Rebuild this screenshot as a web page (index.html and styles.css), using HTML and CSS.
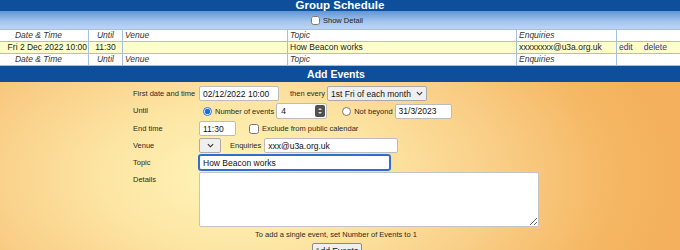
FILE: index.html
```html
<!DOCTYPE html>
<html lang="en">

<head>
  <meta charset="UTF-8">
  <meta name="viewport" content="width=device-width, initial-scale=1.0">
  <title>Group Schedule</title>
  <link rel="stylesheet" href="styles.css">
</head>

<body>
  <div class="bar-title top">Group Schedule</div>
  <div class="bar-light">
    <label><input type="checkbox"> Show Detail</label>
  </div>

  <table class="events">
    <colgroup>
      <col style="width:100px">
      <col style="width:34px">
      <col style="width:165px">
      <col style="width:229px">
      <col style="width:100px">
      <col style="width:64px">
    </colgroup>
    <tr class="head">
      <td class="c-date">Date &amp; Time</td>
      <td class="c-until">Until</td>
      <td>Venue</td>
      <td>Topic</td>
      <td>Enquiries</td>
      <td></td>
    </tr>
    <tr class="row">
      <td class="c-date">Fri 2 Dec 2022 10:00</td>
      <td class="c-until">11:30</td>
      <td></td>
      <td>How Beacon works</td>
      <td>xxxxxxxx@u3a.org.uk</td>
      <td class="actions"><a href="#">edit</a><a href="#">delete</a></td>
    </tr>
    <tr class="head">
      <td class="c-date">Date &amp; Time</td>
      <td class="c-until">Until</td>
      <td>Venue</td>
      <td>Topic</td>
      <td>Enquiries</td>
      <td></td>
    </tr>
  </table>

  <div class="bar-title add">Add Events</div>

  <form class="add-form">
    <div class="fields">
      <label class="lbl">First date and time</label>
      <div class="line">
        <input class="in w-date" type="text" value="02/12/2022 10:00">
        <span class="then">then every</span>
        <span class="sel w-every">
          <select><option>1st Fri of each month</option></select>
          <svg class="chev" viewBox="0 0 8 5"><polyline points="1,1 4,4 7,1"/></svg>
        </span>
      </div>

      <label class="lbl">Until</label>
      <div class="line tall">
        <input class="radio" type="radio" name="until" checked>
        <span class="opt">Number of events</span>
        <span class="num">
          <input type="text" value="4">
          <span class="spin"><i class="up"></i><i class="down"></i></span>
        </span>
        <input class="radio second" type="radio" name="until">
        <span class="opt">Not beyond</span>
        <input class="in w-beyond" type="text" value="31/3/2023">
      </div>

      <label class="lbl">End time</label>
      <div class="line">
        <input class="in w-end" type="text" value="11:30">
        <input class="check" type="checkbox">
        <span class="opt">Exclude from public calendar</span>
      </div>

      <label class="lbl">Venue</label>
      <div class="line">
        <span class="sel w-venue">
          <select><option></option></select>
          <svg class="chev" viewBox="0 0 8 5"><polyline points="1,1 4,4 7,1"/></svg>
        </span>
        <span class="enq">Enquiries</span>
        <input class="in w-enq" type="text" value="xxx@u3a.org.uk">
      </div>

      <label class="lbl">Topic</label>
      <div class="line">
        <input class="in w-topic focused" type="text" value="How Beacon works">
      </div>

      <label class="lbl">Details</label>
      <div>
        <textarea class="details"></textarea>
      </div>
    </div>

    <p class="note">To add a single event, set Number of Events to 1</p>
    <div class="submit">
      <button type="button">Add Events</button>
    </div>
  </form>
</body>

</html>
```

FILE: styles.css
```css
* {
  box-sizing: border-box;
}

body {
  margin: 0;
  font-family: "Liberation Sans", Arial, sans-serif;
  color: #222;
  background: #f5b764;
  overflow: hidden;
}

.bar-title {
  background: #0d4f9b;
  color: white;
  font-weight: bold;
  text-align: center;
}

.bar-title.top {
  height: 11px;
  line-height: 11px;
  font-size: 11.5px;
}

.bar-title.add {
  height: 16px;
  line-height: 16px;
  font-size: 10.5px;
  padding-right: 8px;
}

.bar-light {
  height: 18px;
  display: flex;
  justify-content: center;
  align-items: center;
  background: linear-gradient(#5f95d7, #a7c6ec 60%, #bcd5f2);
  font-size: 7.5px;
  padding-right: 6px;
}

.bar-light label {
  display: flex;
  align-items: center;
  gap: 3px;
}

.bar-light input {
  width: 9px;
  height: 9px;
  margin: 0;
}

/* schedule table */
.events {
  border-collapse: collapse;
  table-layout: fixed;
  width: 692px;
  margin-left: -12px;
  background: white;
  font-size: 8.5px;
}

.events td {
  border: 1px solid #a3c0e0;
  height: 11px;
  line-height: 11px;
  padding: 0 2px;
  white-space: nowrap;
  overflow: hidden;
}

.events tr.head td {
  font-style: italic;
  color: #333;
}

.events tr.row td {
  background: #ffffcc;
}

.events .c-date,
.events .c-until {
  text-align: center;
}

.events tr.row .c-date {
  text-align: right;
  padding-right: 1px;
}

.events .actions a {
  color: #2b2bb8;
  text-decoration: none;
  margin-right: 11px;
}

/* add events form */
.add-form {
  margin: 0;
  padding: 4px 0 12px;
  font-size: 7.5px;
  color: #2a2a2a;
  background: radial-gradient(ellipse 440px 240px at 240px 95px, #fff5bb 0%, #fde6a4 30%, #f9cd85 60%, #f5b763 85%, #f4b05c 100%);
}

.fields {
  display: grid;
  grid-template-columns: 66px 1fr;
  row-gap: 2px;
  margin-left: 133px;
}

.lbl {
  line-height: 15px;
}

.line {
  display: flex;
  align-items: center;
  height: 15px;
}

.line.tall {
  height: 16px;
}

.in {
  height: 15px;
  border: 1px solid #bcbcbc;
  border-radius: 2px;
  background: white;
  font: 8.5px "Liberation Sans", Arial, sans-serif;
  color: #111;
  padding: 0 3px;
  outline: none;
}

.w-date { width: 80px; }
.w-beyond { width: 57px; margin-left: 2px; }
.w-end { width: 37px; }
.w-enq { width: 134px; margin-left: 3px; }
.w-topic { width: 191px; }

.in.focused {
  border-color: #2f6dcf;
  box-shadow: 0 0 0 1px #2f6dcf;
}

.then {
  margin-left: 11px;
}

.sel {
  position: relative;
  display: inline-block;
  height: 15px;
  margin-left: 2px;
}

.sel select {
  appearance: none;
  width: 100%;
  height: 15px;
  border: 1px solid #a9a9a9;
  border-radius: 2px;
  background: #efefef;
  font: 8.5px "Liberation Sans", Arial, sans-serif;
  color: #111;
  padding: 0 0 0 3px;
  outline: none;
}

.chev {
  position: absolute;
  right: 4px;
  top: 5px;
  width: 7px;
  height: 5px;
  fill: none;
  stroke: #333;
  stroke-width: 1.3;
}

.w-every { width: 100px; }

.w-venue {
  width: 22px;
  margin-left: 0;
}

.w-venue .chev {
  right: 7px;
}

.enq {
  margin-left: 9px;
}

.radio {
  width: 9px;
  height: 9px;
  margin: 0 0 0 4px;
  accent-color: #1f6fd8;
}

.radio.second {
  margin-left: 15px;
}

.opt {
  margin-left: 3px;
}

.check {
  width: 10px;
  height: 10px;
  margin: 0 0 0 13px;
}

.num {
  display: flex;
  width: 51px;
  height: 16px;
  margin-left: 2px;
  border: 1px solid #bcbcbc;
  border-radius: 2px;
  background: white;
}

.num input {
  flex: 1;
  width: 0;
  border: none;
  outline: none;
  padding: 0 4px;
  font: 8.5px "Liberation Sans", Arial, sans-serif;
  color: #111;
  background: transparent;
}

.spin {
  width: 10px;
  margin: 1px;
  border-radius: 2px;
  background: #505050;
  display: flex;
  flex-direction: column;
  justify-content: space-evenly;
  align-items: center;
}

.spin i {
  width: 0;
  height: 0;
  border-left: 2px solid transparent;
  border-right: 2px solid transparent;
}

.spin .up {
  border-bottom: 2px solid #ddd;
}

.spin .down {
  border-top: 2px solid #ddd;
}

.details {
  display: block;
  width: 340px;
  height: 55px;
  border: 1px solid #c4c4c4;
  border-radius: 2px;
  background: white;
}

.note {
  margin: 2px 0 0;
  padding-right: 8px;
  text-align: center;
  line-height: 11px;
}

.submit {
  display: flex;
  justify-content: center;
  padding-right: 7px;
  margin-top: 3px;
}

.submit button {
  width: 50px;
  height: 16px;
  padding: 0;
  border: 1px solid #8a8a8a;
  border-radius: 2px;
  background: #efefef;
  font: 8.5px "Liberation Sans", Arial, sans-serif;
  color: #111;
}
```
